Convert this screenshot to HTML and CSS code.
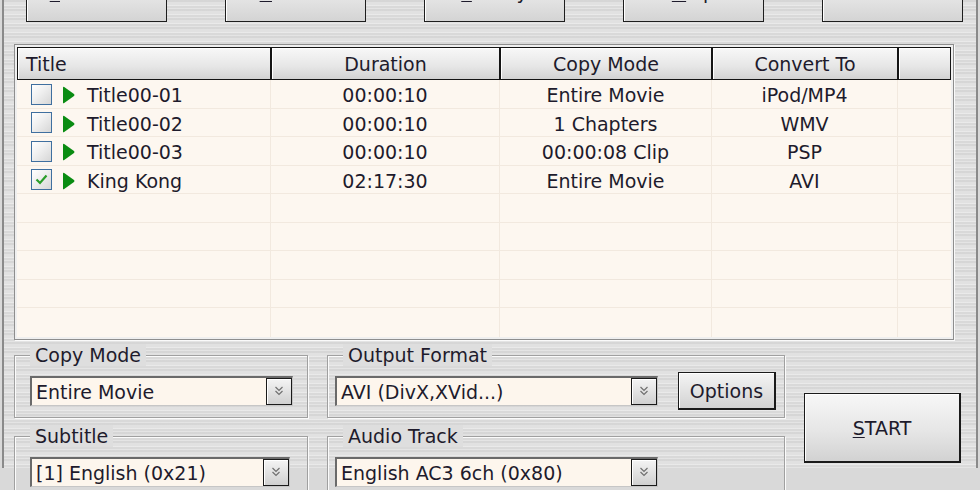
FILE: index.html
```html
<!DOCTYPE html>
<html>
<head>
<meta charset="utf-8">
<link rel="stylesheet" href="styles.css">
</head>
<body>
<div class="screen">
  <div class="frame">
    <div class="toolbar">
      <div class="tbtn"><span class="tlabel"><u>L</u>oad DVD</span></div>
      <div class="tbtn"><span class="tlabel"><u>R</u>efresh</span></div>
      <div class="tbtn"><span class="tlabel"><u>L</u>ibrary</span></div>
      <div class="tbtn"><span class="tlabel"><u>H</u>elp</span></div>
      <div class="tbtn"><span class="tlabel">Exit</span></div>
    </div>

    <div class="list">
      <div class="hdr">
        <div class="hc c1 lefttext">Title</div>
        <div class="hc c2">Duration</div>
        <div class="hc c3">Copy Mode</div>
        <div class="hc c4">Convert To</div>
        <div class="hc c5"></div>
      </div>
      <div class="row">
        <div class="cell c1 tcell"><span class="cb"></span><svg class="play" width="13" height="18" viewBox="0 0 13 18"><path d="M1 1.6 Q1 0.2 2.2 1 L12 8.1 Q13 9 12 9.9 L2.2 17 Q1 17.8 1 16.4 Z" fill="#0a8c12"/></svg><span class="txt">Title00-01</span></div>
        <div class="cell c2"><span class="txt">00:00:10</span></div>
        <div class="cell c3"><span class="txt">Entire Movie</span></div>
        <div class="cell c4"><span class="txt">iPod/MP4</span></div>
        <div class="cell c5"></div>
      </div>
      <div class="row">
        <div class="cell c1 tcell"><span class="cb"></span><svg class="play" width="13" height="18" viewBox="0 0 13 18"><path d="M1 1.6 Q1 0.2 2.2 1 L12 8.1 Q13 9 12 9.9 L2.2 17 Q1 17.8 1 16.4 Z" fill="#0a8c12"/></svg><span class="txt">Title00-02</span></div>
        <div class="cell c2"><span class="txt">00:00:10</span></div>
        <div class="cell c3"><span class="txt">1 Chapters</span></div>
        <div class="cell c4"><span class="txt">WMV</span></div>
        <div class="cell c5"></div>
      </div>
      <div class="row">
        <div class="cell c1 tcell"><span class="cb"></span><svg class="play" width="13" height="18" viewBox="0 0 13 18"><path d="M1 1.6 Q1 0.2 2.2 1 L12 8.1 Q13 9 12 9.9 L2.2 17 Q1 17.8 1 16.4 Z" fill="#0a8c12"/></svg><span class="txt">Title00-03</span></div>
        <div class="cell c2"><span class="txt">00:00:10</span></div>
        <div class="cell c3"><span class="txt">00:00:08 Clip</span></div>
        <div class="cell c4"><span class="txt">PSP</span></div>
        <div class="cell c5"></div>
      </div>
      <div class="row">
        <div class="cell c1 tcell"><span class="cb"><svg width="19" height="19" viewBox="0 0 19 19"><path d="M4.5 9.5 L8 13 L14.5 5.5" fill="none" stroke="#2a9e2a" stroke-width="2.2"/></svg></span><svg class="play" width="13" height="18" viewBox="0 0 13 18"><path d="M1 1.6 Q1 0.2 2.2 1 L12 8.1 Q13 9 12 9.9 L2.2 17 Q1 17.8 1 16.4 Z" fill="#0a8c12"/></svg><span class="txt">King Kong</span></div>
        <div class="cell c2"><span class="txt">02:17:30</span></div>
        <div class="cell c3"><span class="txt">Entire Movie</span></div>
        <div class="cell c4"><span class="txt">AVI</span></div>
        <div class="cell c5"></div>
      </div>
      <div class="row"><div class="cell c1"></div><div class="cell c2"></div><div class="cell c3"></div><div class="cell c4"></div><div class="cell c5"></div></div>
      <div class="row"><div class="cell c1"></div><div class="cell c2"></div><div class="cell c3"></div><div class="cell c4"></div><div class="cell c5"></div></div>
      <div class="row"><div class="cell c1"></div><div class="cell c2"></div><div class="cell c3"></div><div class="cell c4"></div><div class="cell c5"></div></div>
      <div class="row"><div class="cell c1"></div><div class="cell c2"></div><div class="cell c3"></div><div class="cell c4"></div><div class="cell c5"></div></div>
      <div class="row last"><div class="cell c1"></div><div class="cell c2"></div><div class="cell c3"></div><div class="cell c4"></div><div class="cell c5"></div></div>
    </div>

    <div class="bottom">
      <div class="col leftcol">
        <div class="group gl">
          <span class="glabel">Copy Mode</span>
          <div class="dd w263"><span class="ddtext">Entire Movie</span><span class="ddbtn"><svg width="10" height="10" viewBox="0 0 10 10"><path d="M1.5 1 L5 4.5 L8.5 1 M1.5 5 L5 8.5 L8.5 5" fill="none" stroke="#707070" stroke-width="1.2"/></svg></span></div>
        </div>
        <div class="group gl">
          <span class="glabel">Subtitle</span>
          <div class="dd w260"><span class="ddtext">[1] English (0x21)</span><span class="ddbtn"><svg width="10" height="10" viewBox="0 0 10 10"><path d="M1.5 1 L5 4.5 L8.5 1 M1.5 5 L5 8.5 L8.5 5" fill="none" stroke="#707070" stroke-width="1.2"/></svg></span></div>
        </div>
      </div>
      <div class="col midcol">
        <div class="group gm">
          <span class="glabel">Output Format</span>
          <div class="grow">
            <div class="dd w323"><span class="ddtext">AVI (DivX,XVid...)</span><span class="ddbtn"><svg width="10" height="10" viewBox="0 0 10 10"><path d="M1.5 1 L5 4.5 L8.5 1 M1.5 5 L5 8.5 L8.5 5" fill="none" stroke="#707070" stroke-width="1.2"/></svg></span></div>
            <div class="pbtn">Options</div>
          </div>
        </div>
        <div class="group gm2">
          <span class="glabel">Audio Track</span>
          <div class="dd w323"><span class="ddtext">English AC3 6ch (0x80)</span><span class="ddbtn"><svg width="10" height="10" viewBox="0 0 10 10"><path d="M1.5 1 L5 4.5 L8.5 1 M1.5 5 L5 8.5 L8.5 5" fill="none" stroke="#707070" stroke-width="1.2"/></svg></span></div>
        </div>
      </div>
      <div class="col startcol">
        <div class="startbtn"><span><u>S</u>TART</span></div>
      </div>
    </div>
  </div>
</div>
</body>
</html>
```

FILE: styles.css
```css
* { box-sizing: border-box; }
html, body { margin: 0; padding: 0; }
body {
  font-family: "DejaVu Sans", Verdana, sans-serif;
  font-size: 19px;
  color: #1e1b2c;
  background: #d4d4d4;
}
.screen {
  width: 980px;
  height: 490px;
  overflow: hidden;
  padding-left: 2px;
  background-color: #d9d9d9;
}
.frame {
  width: 976px;
  height: 490px;
  border-left: 2px solid #8a8a8a;
  border-right: 2px solid #8a8a8a;
  background-color: #dedede;
  background-image:
    repeating-linear-gradient(180deg, rgba(255,255,255,0.35) 0 1px, rgba(0,0,0,0.025) 1px 3px, rgba(255,255,255,0.18) 3px 4px, rgba(0,0,0,0.035) 4px 6px, rgba(255,255,255,0.1) 6px 9px);
}

/* toolbar */
.toolbar {
  display: flex;
  gap: 58px;
  padding-left: 22px;
  margin-top: -22px;
  height: 44px;
}
.tbtn {
  width: 141px;
  height: 44px;
  border: 1px solid #1e1e1e;
  background: linear-gradient(180deg, #f2f2f2, #d4d4d4);
  box-shadow: inset 1px 1px 0 #fff;
  display: flex;
  justify-content: center;
  align-items: flex-start;
  padding-top: 1.5px;
}
.tlabel { line-height: 22px; }
.tlabel u, .startbtn u { text-underline-offset: 2px; }

/* list */
.list {
  margin: 22px 0 0 10px;
  width: 940px;
  border: 1px solid #8e8e8e;
  padding: 2px;
  background: #efefef;
  box-shadow: 1px 1px 0 #fafafa;
}
.hdr { display: flex; height: 33px; }
.hc {
  height: 33px;
  border: 1px solid #141414;
  background: linear-gradient(180deg, #f8f8f8 0%, #e6e6e6 60%, #d2d2d2 100%);
  box-shadow: inset 1px 1px 0 #fff;
  display: flex;
  align-items: center;
  justify-content: center;
  padding-top: 1px;
}
.hc.lefttext { justify-content: flex-start; padding-left: 8px; }
.c1 { width: 254px; }
.c2 { width: 229px; }
.c3 { width: 212px; }
.c4 { width: 186px; }
.c5 { width: 53px; }

.row { display: flex; height: 28.5px; background: #fdf7f0; }
.cell {
  height: 28.5px;
  border-right: 1px solid #f2e9df;
  border-bottom: 1px solid #f2e9df;
  display: flex;
  align-items: center;
  justify-content: center;
}
.cell.c5 { border-right: none; }
.row.last .cell { border-bottom: none; }
.txt { padding-top: 3px; line-height: 22px; white-space: nowrap; }
.tcell { justify-content: flex-start; padding-left: 14px; }
.cb {
  width: 21px;
  height: 21px;
  border: 1px solid #3f6f9f;
  background: linear-gradient(135deg, #ffffff 0%, #efefef 45%, #d6d6d6 100%);
  display: flex;
  align-items: center;
  justify-content: center;
  margin-top: 1px;
}
.play { margin-left: 10px; margin-right: 12px; margin-top: 3px; }

/* bottom */
.bottom {
  display: flex;
  gap: 19px;
  margin: 15px 0 0 10px;
}
.col { display: flex; flex-direction: column; gap: 18px; }
.leftcol { width: 294px; }
.midcol { width: 458px; }
.startcol { width: 157px; padding-top: 38px; }

.group {
  position: relative;
  border: 1px solid #a0a0a0;
  box-shadow: inset 1px 1px 0 #fbfbfb, 1px 1px 0 #fbfbfb;
  height: 63px;
}
.gl { padding: 20px 0 0 15px; }
.gm { padding: 16px 0 0 7px; }
.gm2 { padding: 20px 0 0 7px; }
.glabel {
  position: absolute;
  top: -12px;
  left: 15px;
  padding: 0 5px;
  line-height: 22px;
  background: #dedede;
  white-space: nowrap;
}
.grow { display: flex; align-items: center; gap: 20px; height: 38px; }

.dd {
  height: 30px;
  display: flex;
  align-items: stretch;
  background: #fdf6ed;
  border-top: 2px solid #6a6a6a;
  border-left: 2px solid #6a6a6a;
  border-bottom: 1px solid #c6c6c6;
  border-right: 1px solid #c6c6c6;
}
.w263 { width: 263px; }
.w260 { width: 260px; }
.w323 { width: 323px; }
.ddtext {
  flex: 1;
  padding-left: 4px;
  padding-top: 2px;
  display: flex;
  align-items: center;
  white-space: nowrap;
  overflow: hidden;
}
.ddbtn {
  width: 26px;
  border: 1px solid #1a1a1a;
  background: linear-gradient(180deg, #f4f4f4, #d0d0d0);
  box-shadow: inset 1px 1px 0 #fff;
  display: flex;
  align-items: center;
  justify-content: center;
}
.pbtn {
  width: 98px;
  height: 38px;
  border: 1px solid #1a1a1a;
  border-right-width: 2px;
  border-bottom-width: 2px;
  background: linear-gradient(180deg, #f4f4f4, #d2d2d2);
  box-shadow: inset 1px 1px 0 #fff;
  display: flex;
  align-items: center;
  justify-content: center;
  padding-top: 1px;
}
.startbtn {
  width: 157px;
  height: 70px;
  border: 1px solid #1a1a1a;
  border-right-width: 2px;
  border-bottom-width: 2px;
  background: linear-gradient(180deg, #f7f7f7, #e6e6e6 55%, #d2d2d2);
  box-shadow: inset 1px 1px 0 #fff;
  display: flex;
  align-items: center;
  justify-content: center;
  padding-top: 1px;
}
```
